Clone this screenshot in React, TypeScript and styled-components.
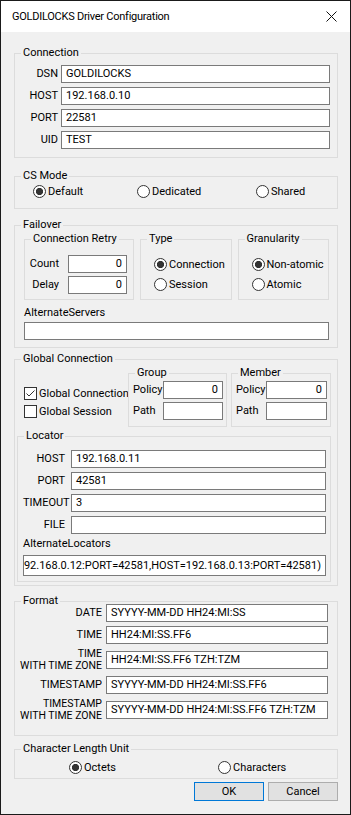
import styled, { createGlobalStyle } from "styled-components"

const GlobalStyle = createGlobalStyle`
  html, body {
    margin: 0;
    padding: 0;
    background: #fff;
  }
  body {
    font-family: Roboto, "Noto Sans CJK KR", sans-serif;
    font-size: 11px;
    color: #000;
  }
  * {
    box-sizing: border-box;
  }
`

const Window = styled.div`
  width: 351px;
  height: 815px;
  border: 1px solid #1a1a1a;
  background: #f0f0f0;
  display: flex;
  flex-direction: column;
`
const TitleBar = styled.div`
  flex: none;
  height: 31px;
  background: #fff;
  display: flex;
  align-items: center;
  justify-content: space-between;
  padding: 0 13px 0 11px;
  font-size: 11px;
  letter-spacing: -0.25px;
`
const Body = styled.div`
  display: flex;
  flex-direction: column;
  padding: 14px 12px 0 13px;
`
const Group = styled.fieldset<{ $mt?: number }>`
  margin: ${p => p.$mt ?? 0}px 0 0;
  padding: 0;
  border: 1px solid #dcdcdc;
  min-width: 0;
`
const Legend = styled.legend`
  margin-left: 6px;
  padding: 0 2px;
  font-size: 11px;
  line-height: 14px;
`
const Pad = styled.div<{ $p: string }>`
  padding: ${p => p.$p};
`
const FieldGrid = styled.div<{ $label: number; $gap: number; $rowGap: number; $p?: string; $mt?: number }>`
  display: grid;
  grid-template-columns: ${p => p.$label}px minmax(0, 1fr);
  column-gap: ${p => p.$gap}px;
  row-gap: ${p => p.$rowGap}px;
  align-items: center;
  margin-top: ${p => p.$mt ?? 0}px;
  padding: ${p => p.$p ?? "0"};
`
const Label = styled.span<{ $left?: boolean }>`
  text-align: ${p => (p.$left ? "left" : "right")};
  white-space: nowrap;
  line-height: 14px;
`
const TwoLine = styled.span`
  text-align: right;
  white-space: nowrap;
  line-height: 12px;
  font-size: 10.5px;
`
const Edit = styled.div<{ $right?: boolean; $end?: boolean; $h?: number }>`
  height: ${p => p.$h ?? 18}px;
  background: #fff;
  border: 1px solid #7a7a7a;
  padding: 0 4px;
  display: flex;
  align-items: center;
  justify-content: ${p => (p.$right || p.$end ? "flex-end" : "flex-start")};
  overflow: hidden;
  white-space: nowrap;
  line-height: 16px;
`
const RadioRow = styled.div<{ $cols: string; $p: string }>`
  display: grid;
  grid-template-columns: ${p => p.$cols};
  padding: ${p => p.$p};
`
const RadioStack = styled.div<{ $p: string }>`
  display: flex;
  flex-direction: column;
  gap: 4px;
  padding: ${p => p.$p};
`
const Option = styled.label`
  display: inline-flex;
  align-items: center;
  gap: 2px;
  height: 16px;
  white-space: nowrap;
`
const RadioMark = styled.span<{ $on?: boolean }>`
  flex: none;
  width: 13px;
  height: 13px;
  border-radius: 50%;
  border: 1px solid #333;
  background: ${p => (p.$on ? "radial-gradient(circle, #333 0 3.3px, #fff 3.9px)" : "#fff")};
`
const CheckMark = styled.span`
  flex: none;
  width: 13px;
  height: 13px;
  border: 1px solid #333;
  background: #fff;
  display: flex;
  margin-right: 2px;
`
const SubGrid = styled.div`
  display: grid;
  grid-template-columns: 110px minmax(0, 1fr) minmax(0, 1fr);
  column-gap: 6px;
`
const Caption = styled.div<{ $mt: number }>`
  margin-top: ${p => p.$mt}px;
  line-height: 14px;
`
const Spaced = styled.div<{ $mt: number }>`
  margin-top: ${p => p.$mt}px;
`
const TopRow = styled.div`
  display: flex;
  gap: 4px;
  padding-left: 7px;
`
const CheckColumn = styled.div`
  width: 100px;
  display: flex;
  flex-direction: column;
  gap: 5px;
  padding-top: 21px;
`
const CheckItem = styled.label`
  display: flex;
  align-items: center;
  height: 13px;
  white-space: nowrap;
`
const Buttons = styled.div`
  display: flex;
  justify-content: flex-end;
  gap: 4px;
  margin-top: 3px;
`
const Button = styled.button<{ $default?: boolean }>`
  width: 70px;
  height: 19px;
  padding: 0;
  background: #e1e1e1;
  border: 1px solid ${p => (p.$default ? "#0078d7" : "#adadad")};
  font-family: inherit;
  font-size: 11px;
  color: #000;
`

function Radio({ label, on }: { label: string; on?: boolean }) {
  return (
    <Option>
      <RadioMark $on={on} />
      {label}
    </Option>
  )
}

function Check({ label, on }: { label: string; on?: boolean }) {
  return (
    <CheckItem>
      <CheckMark>
        {on && (
          <svg width="11" height="11" viewBox="0 0 11 11">
            <path d="M1.5 5.5 L4 8 L9.5 2.5" fill="none" stroke="#333" strokeWidth="1" />
          </svg>
        )}
      </CheckMark>
      {label}
    </CheckItem>
  )
}

function App() {
  return (
    <>
      <GlobalStyle />
      <Window>
        <TitleBar>
          <span>GOLDILOCKS Driver Configuration</span>
          <svg width="11" height="11" viewBox="0 0 11 11">
            <path d="M0.5 0.5 L10.5 10.5 M10.5 0.5 L0.5 10.5" stroke="#111" strokeWidth="1" />
          </svg>
        </TitleBar>
        <Body>
          <Group>
            <Legend>Connection</Legend>
            <FieldGrid $label={37} $gap={3} $rowGap={4} $p="5px 7px 8px 6px">
              <Label>DSN</Label>
              <Edit>GOLDILOCKS</Edit>
              <Label>HOST</Label>
              <Edit>192.168.0.10</Edit>
              <Label>PORT</Label>
              <Edit>22581</Edit>
              <Label>UID</Label>
              <Edit>TEST</Edit>
            </FieldGrid>
          </Group>

          <Group $mt={11}>
            <Legend>CS Mode</Legend>
            <RadioRow $cols="104px 119px 1fr" $p="0 0 9px 18px">
              <Radio label="Default" on />
              <Radio label="Dedicated" />
              <Radio label="Shared" />
            </RadioRow>
          </Group>

          <Group $mt={9}>
            <Legend>Failover</Legend>
            <Pad $p="0 8px 7px 9px">
              <SubGrid>
                <Group>
                  <Legend>Connection Retry</Legend>
                  <FieldGrid $label={34} $gap={9} $rowGap={3} $p="9px 6px 5px 0">
                    <Label>Count</Label>
                    <Edit $right>0</Edit>
                    <Label>Delay</Label>
                    <Edit $right>0</Edit>
                  </FieldGrid>
                </Group>
                <Group>
                  <Legend>Type</Legend>
                  <RadioStack $p="10px 0 7px 13px">
                    <Radio label="Connection" on />
                    <Radio label="Session" />
                  </RadioStack>
                </Group>
                <Group>
                  <Legend>Granularity</Legend>
                  <RadioStack $p="10px 0 7px 13px">
                    <Radio label="Non-atomic" on />
                    <Radio label="Atomic" />
                  </RadioStack>
                </Group>
              </SubGrid>
              <Caption $mt={6}>AlternateServers</Caption>
              <Spaced $mt={2}>
                <Edit />
              </Spaced>
            </Pad>
          </Group>

          <Group $mt={4}>
            <Legend>Global Connection</Legend>
            <Pad $p="0 6px 3px 2px">
              <TopRow>
                <CheckColumn>
                  <Check label="Global Connection" on />
                  <Check label="Global Session" />
                </CheckColumn>
                <Group style={{ width: 99 }}>
                  <Legend>Group</Legend>
                  <FieldGrid $label={26} $gap={4} $rowGap={3} $p="1px 3px 6px 4px">
                    <Label $left>Policy</Label>
                    <Edit $right>0</Edit>
                    <Label $left>Path</Label>
                    <Edit />
                  </FieldGrid>
                </Group>
                <Group style={{ flex: 1 }}>
                  <Legend>Member</Legend>
                  <FieldGrid $label={26} $gap={4} $rowGap={3} $p="1px 3px 6px 4px">
                    <Label $left>Policy</Label>
                    <Edit $right>0</Edit>
                    <Label $left>Path</Label>
                    <Edit />
                  </FieldGrid>
                </Group>
              </TopRow>
              <Group $mt={2}>
                <Legend>Locator</Legend>
                <Pad $p="7px 4px 5px 5px">
                  <FieldGrid $label={42} $gap={6} $rowGap={4}>
                    <Label>HOST</Label>
                    <Edit>192.168.0.11</Edit>
                    <Label>PORT</Label>
                    <Edit>42581</Edit>
                    <Label>TIMEOUT</Label>
                    <Edit>3</Edit>
                    <Label>FILE</Label>
                    <Edit />
                  </FieldGrid>
                  <Caption $mt={3}>AlternateLocators</Caption>
                  <Spaced $mt={4}>
                    <Edit $end $h={21}>
                      (HOST=192.168.0.12:PORT=42581,HOST=192.168.0.13:PORT=42581)
                    </Edit>
                  </Spaced>
                </Pad>
              </Group>
            </Pad>
          </Group>

          <Group $mt={8}>
            <Legend>Format</Legend>
            <FieldGrid $label={87} $gap={4} $rowGap={4} $mt={-4} $p="0 9px 13px 0">
              <Label>DATE</Label>
              <Edit>SYYYY-MM-DD HH24:MI:SS</Edit>
              <Label>TIME</Label>
              <Edit>HH24:MI:SS.FF6</Edit>
              <TwoLine>
                TIME
                <br />
                WITH TIME ZONE
              </TwoLine>
              <Edit>HH24:MI:SS.FF6 TZH:TZM</Edit>
              <Label>TIMESTAMP</Label>
              <Edit>SYYYY-MM-DD HH24:MI:SS.FF6</Edit>
              <TwoLine>
                TIMESTAMP
                <br />
                WITH TIME ZONE
              </TwoLine>
              <Edit>SYYYY-MM-DD HH24:MI:SS.FF6 TZH:TZM</Edit>
            </FieldGrid>
          </Group>

          <Group $mt={6}>
            <Legend>Character Length Unit</Legend>
            <RadioRow $cols="149px 1fr" $p="3px 0 3px 54px">
              <Radio label="Octets" on />
              <Radio label="Characters" />
            </RadioRow>
          </Group>

          <Buttons>
            <Button $default>OK</Button>
            <Button>Cancel</Button>
          </Buttons>
        </Body>
      </Window>
    </>
  )
}

export default App
